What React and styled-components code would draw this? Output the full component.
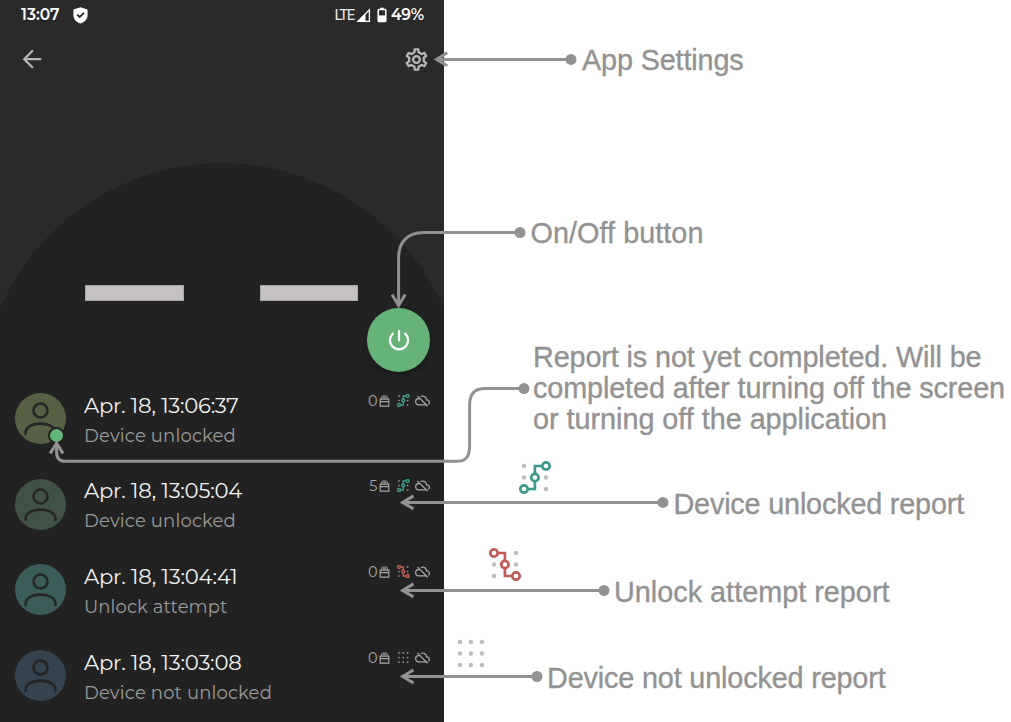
import React, { useLayoutEffect, useRef, useState } from "react";
import styled, { createGlobalStyle } from "styled-components";
import { MdOutlineCloudOff, MdOutlineSettings } from "react-icons/md";

const GlobalStyle = createGlobalStyle`
  * { box-sizing: border-box; }
  body { margin: 0; background: #ffffff; }
`;

const Canvas = styled.main`
  position: relative;
  width: 1011px;
  height: 722px;
  overflow: hidden;
  background: #ffffff;
`;

const Phone = styled.section`
  width: 444px;
  height: 722px;
  display: flex;
  flex-direction: column;
  overflow: hidden;
  background: #222222;
  font-family: "Montserrat", "Inter", sans-serif;
`;

const Header = styled.header`
  position: relative;
  flex: none;
  height: 375.5px;
  display: flex;
  flex-direction: column;
  background: #2a2a2a;
`;

const DomeClip = styled.div`
  position: absolute;
  inset: 0;
  overflow: hidden;
`;

const Dome = styled.div`
  width: 484px;
  height: 484px;
  margin: 162.5px 0 0 -20px;
  border-radius: 50%;
  background: #222222;
`;

const StatusBar = styled.div`
  position: relative;
  height: 30px;
  padding: 0 20px 0 21px;
  display: flex;
  align-items: center;
  justify-content: space-between;
  color: #ffffff;
  font: 600 15.5px/30px "Montserrat", "Roboto", sans-serif;
`;

const StatusGroup = styled.div`
  display: flex;
  align-items: center;
  gap: ${(p) => p.$gap}px;
  svg { display: block; }
`;

const Network = styled.span`
  font: 400 15px/30px "Roboto", sans-serif;
  color: #e8e8e8;
`;

const AppBar = styled.nav`
  position: relative;
  height: 58px;
  padding: 0 14px 0 22px;
  display: flex;
  align-items: center;
  justify-content: space-between;
`;

const IconButton = styled.button`
  padding: 0;
  border: 0;
  background: none;
  color: #b7b7b7;
  svg { display: block; }
`;

const Stats = styled.div`
  position: relative;
  margin-top: 197.2px;
  padding: 0 85.6px 0 85.3px;
  display: flex;
  justify-content: space-between;
`;

const StatBlock = styled.div`
  width: 98.7px;
  height: 15.6px;
  background: #c5c1c1;
  border: 0.5px solid #a9a7a7;
`;

const PowerButton = styled.button`
  position: absolute;
  left: 367px;
  top: 308.3px;
  width: 63.4px;
  height: 63.4px;
  padding: 0;
  border: 0;
  border-radius: 50%;
  display: grid;
  place-items: center;
  background: #65b379;
  box-shadow: 0 2px 5px rgba(0, 0, 0, 0.35);
`;

const List = styled.ul`
  margin: 0;
  padding: 0;
  list-style: none;
`;

const Row = styled.li`
  height: 85.7px;
  padding: 0 14.5px 0 15px;
  display: grid;
  grid-template-columns: 51px 1fr auto;
  column-gap: 18px;
`;

const Avatar = styled.div`
  position: relative;
  align-self: center;
  width: 51px;
  height: 51px;
  border-radius: 50%;
  background: ${(p) => p.$color};
  svg { display: block; }
`;

const ActiveBadge = styled.span`
  position: absolute;
  left: 33px;
  top: 34px;
  width: 17px;
  height: 17px;
  border: 2px solid #222222;
  border-radius: 50%;
  background: #60b97a;
`;

const Details = styled.div`
  padding-top: 16px;
`;

const Title = styled.div`
  height: 31px;
  line-height: 27px;
  font-size: 21.2px;
  color: #f2f2f2;
`;

const Subtitle = styled.div`
  line-height: 27px;
  font-size: 18px;
  color: #9b9b9b;
`;

const Meta = styled.div`
  height: 14px;
  margin-top: 17.5px;
  display: flex;
  align-items: center;
  color: #a6a6a6;
  font-size: 14.5px;
  line-height: 14px;
  svg { display: block; }
`;

const Count = styled.span`
  margin-right: 1px;
  position: relative;
  top: 0.5px;
`;

const PatternSlot = styled.span`
  margin: 0 5px 0 7px;
`;

const Fit = styled.span`
  display: inline-block;
  white-space: nowrap;
`;

const Connectors = styled.svg`
  position: absolute;
  inset: 0;
`;

const Label = styled.div`
  position: absolute;
  left: ${(p) => p.$x}px;
  top: ${(p) => p.$y}px;
  display: flex;
  flex-direction: column;
  align-items: flex-start;
  color: #929292;
  font: 28.8px/31px "Liberation Sans", Arial, sans-serif;
  -webkit-text-stroke: 0.35px #929292;
`;

const Legend = styled.div`
  position: absolute;
  left: ${(p) => p.$x}px;
  top: ${(p) => p.$y}px;
  svg { display: block; }
`;

/* Spreads its text over a fixed width by adjusting the tracking. */
function FitText({ width, children }) {
  const ref = useRef(null);
  const [spacing, setSpacing] = useState(0);
  useLayoutEffect(() => {
    const natural = ref.current.getBoundingClientRect().width;
    setSpacing((width - natural) / children.length);
  }, [width, children]);
  return (
    <Fit ref={ref} style={{ letterSpacing: `${spacing}px` }}>
      {children}
    </Fit>
  );
}

const COLS = [5, 15.9, 27];
const ROWS = [5, 16.5, 28];
const PATTERNS = {
  unlocked: {
    color: "#3d9a8b",
    path: "M5 28H15.9V5H27",
    nodes: [[27, 5], [15.9, 16.5], [5, 28]],
    skip: ["2,0", "1,1", "0,2", "1,0", "1,2"],
  },
  attempt: {
    color: "#c25b55",
    path: "M5 5H15.9V28H27",
    nodes: [[5, 5], [15.9, 16.5], [27, 28]],
    skip: ["0,0", "1,1", "2,2", "1,0", "1,2"],
  },
  locked: { color: "none", path: "", nodes: [], skip: [] },
};

function Pattern({ kind, size = 33, dot = "#bdbdbd", dotRadius = 2.2, weight = 2.7 }) {
  const { color, path, nodes, skip } = PATTERNS[kind];
  const mask = `pattern-${kind}-${size}`;
  return (
    <svg width={size} height={size} viewBox="0 0 33 33" fill="none">
      <mask id={mask}>
        <rect width="33" height="33" fill="#fff" />
        {nodes.map(([x, y]) => (
          <circle key={`${x}-${y}`} cx={x} cy={y} r="3.2" fill="#000" />
        ))}
      </mask>
      {COLS.map((x, c) =>
        ROWS.map((y, r) =>
          skip.includes(`${c},${r}`) ? null : (
            <circle key={`${c}${r}`} cx={x} cy={y} r={dotRadius} fill={dot} />
          )
        )
      )}
      {path && <path d={path} stroke={color} strokeWidth={weight} mask={`url(#${mask})`} />}
      {nodes.map(([x, y]) => (
        <circle key={`${x}-${y}`} cx={x} cy={y} r="3.7" stroke={color} strokeWidth={weight} />
      ))}
    </svg>
  );
}

function PersonIcon() {
  return (
    <svg width="51" height="51" viewBox="0.5 0.5 51 51" fill="none" stroke="#222" strokeOpacity="0.9" strokeWidth="2.6" strokeLinecap="round">
      <circle cx="26" cy="18" r="7" />
      <path d="M11.1 41.4V39.6C11.6 34.2 18 31.1 26 31.1S40.4 34.2 40.9 39.6V41.4" />
    </svg>
  );
}

function StorageIcon() {
  return (
    <svg width="11" height="13" viewBox="0 0 11 13" fill="none" stroke="currentColor" strokeWidth="1.2">
      <path d="M1.2 5.2H9.8V12.2H1.2ZM1.2 7.6H9.8" />
      <path d="M2.7 5V3L3.6 2H7.4L8.3 3V5M4 3.7H7" strokeWidth="1" />
    </svg>
  );
}

function ShieldIcon() {
  return (
    <svg width="15" height="17" viewBox="0 0 15 17">
      <path d="M7.5 .3L14.6 2.6V8C14.6 12.4 11.5 15.4 7.5 16.5C3.5 15.4 .4 12.4 .4 8V2.6Z" fill="#fff" />
      <path d="M4.2 7.6L6.7 10L11 5.8" fill="none" stroke="#2a2a2a" strokeWidth="1.8" />
    </svg>
  );
}

function SignalIcon() {
  return (
    <svg width="15" height="15" viewBox="0 0 15 15">
      <path d="M13.4 1.8V13.4H2Z" fill="none" stroke="#fff" strokeWidth="1.3" />
      <path d="M.6 14L9.5 5.2V14Z" fill="#fff" />
    </svg>
  );
}

function BatteryIcon() {
  return (
    <svg width="10" height="16" viewBox="0 0 10 16">
      <path d="M3.2 2V.7H6.8V2" fill="#fff" />
      <rect x="1.2" y="2.6" width="7.6" height="12" rx=".8" fill="none" stroke="#fff" strokeWidth="1.5" />
      <path d="M1 8.4H9V15H1Z" fill="#fff" />
    </svg>
  );
}

const LINES = [
  { dot: [571, 59.4], d: "M571 59.4H438", head: "M447.3 52.8L436.5 59.4L447.3 65.8" },
  { dot: [520, 232.5], d: "M520 232.5H424C407.5 232.5 398.6 242 398.6 258V304", head: "M392 294.6L398.6 305.6L405.2 294.6" },
  {
    dot: [524, 388.6],
    d: "M524 388.6H485C474.5 388.6 469.6 394.5 469.6 405V445C469.6 456 466.5 461.3 457 461.3H65Q56.6 461.3 56.6 452V445",
    head: "M50.2 453.4L56.6 443.3L63 453.4",
  },
  { dot: [663, 502.4], d: "M663 502.4H404", head: "M413.5 495.9L402.6 502.4L413.5 508.9" },
  { dot: [604, 590.4], d: "M604 590.4H404", head: "M413.5 583.9L402.6 590.4L413.5 596.9" },
  { dot: [537, 676.5], d: "M537 676.5H404", head: "M413.5 670L402.6 676.5L413.5 683" },
];

const LABELS = [
  { x: 582, y: 45, lines: [["App Settings", 161.5]] },
  { x: 530.5, y: 218, lines: [["On/Off button", 173]] },
  {
    x: 533,
    y: 342,
    lines: [
      ["Report is not yet completed. Will be", 448.5],
      ["completed after turning off the screen", 472],
      ["or turning off the application", 354],
    ],
  },
  { x: 673.5, y: 489, lines: [["Device unlocked report", 290.5]] },
  { x: 614, y: 577, lines: [["Unlock attempt report", 275.5]] },
  { x: 547, y: 663, lines: [["Device not unlocked report", 338.5]] },
];

const REPORTS = [
  { time: "Apr. 18, 13:06:37", w: 154.5, text: "Device unlocked", tw: 152, count: 0, kind: "unlocked", color: "#566042", active: true },
  { time: "Apr. 18, 13:05:04", w: 158, text: "Device unlocked", tw: 152, count: 5, kind: "unlocked", color: "#405146" },
  { time: "Apr. 18, 13:04:41", w: 153.5, text: "Unlock attempt", tw: 143.5, count: 0, kind: "attempt", color: "#3c5c5a" },
  { time: "Apr. 18, 13:03:08", w: 157.5, text: "Device not unlocked", tw: 188, count: 0, kind: "locked", color: "#34434e" },
];

export default function App() {
  return (
    <Canvas>
      <GlobalStyle />
      <Phone>
        <Header>
          <DomeClip>
            <Dome />
          </DomeClip>
          <StatusBar>
            <StatusGroup $gap={13}>
              <FitText width={38.5}>13:07</FitText>
              <ShieldIcon />
            </StatusGroup>
            <StatusGroup $gap={2}>
              <Network><FitText width={19.5}>LTE</FitText></Network>
              <SignalIcon />
              <StatusGroup $gap={4}>
                <Network />
                <BatteryIcon />
                <FitText width={33}>49%</FitText>
              </StatusGroup>
            </StatusGroup>
          </StatusBar>
          <AppBar>
            <IconButton aria-label="Back">
              <svg width="20" height="20" viewBox="0 0 20 20" fill="none" stroke="currentColor" strokeWidth="2.2" strokeLinecap="round">
                <path d="M18.4 10.2H2.5M10.3 2L2.2 10.2L10.3 18.2" />
              </svg>
            </IconButton>
            <IconButton aria-label="App settings">
              <MdOutlineSettings size={27} />
            </IconButton>
          </AppBar>
          <Stats>
            <StatBlock />
            <StatBlock />
          </Stats>
          <PowerButton aria-label="On/Off">
            <svg width="24" height="24" viewBox="0 0 24 24" fill="none" stroke="#fff" strokeWidth="2.2" strokeLinecap="round">
              <path d="M12 3.2V12.4M5.8 5.6A9.1 9.1 0 1 0 18.2 5.6" />
            </svg>
          </PowerButton>
        </Header>
        <List>
          {REPORTS.map((r) => (
            <Row key={r.time}>
              <Avatar $color={r.color}>
                <PersonIcon />
                {r.active && <ActiveBadge />}
              </Avatar>
              <Details>
                <Title><FitText width={r.w}>{r.time}</FitText></Title>
                <Subtitle><FitText width={r.tw}>{r.text}</FitText></Subtitle>
              </Details>
              <Meta>
                <Count>{r.count}</Count>
                <StorageIcon />
                <PatternSlot>
                  <Pattern kind={r.kind} size={13} dot="#9a9a9a" dotRadius={2.2} weight={3.6} />
                </PatternSlot>
                <MdOutlineCloudOff size={15} />
              </Meta>
            </Row>
          ))}
        </List>
      </Phone>
      <Connectors width="1011" height="722" fill="none" stroke="#929292" strokeWidth="3">
        {LINES.map((l) => (
          <g key={l.d}>
            <path d={l.d} />
            <path d={l.head} />
            <circle cx={l.dot[0]} cy={l.dot[1]} r="5.5" fill="#929292" stroke="none" />
          </g>
        ))}
      </Connectors>
      {LABELS.map((l) => (
        <Label key={l.y} $x={l.x} $y={l.y}>
          {l.lines.map(([text, width]) => (
            <FitText key={text} width={width}>{text}</FitText>
          ))}
        </Label>
      ))}
      <Legend $x={518.5} $y={460.8}><Pattern kind="unlocked" /></Legend>
      <Legend $x={488.9} $y={548.2}><Pattern kind="attempt" /></Legend>
      <Legend $x={455.3} $y={637}><Pattern kind="locked" /></Legend>
    </Canvas>
  );
}
